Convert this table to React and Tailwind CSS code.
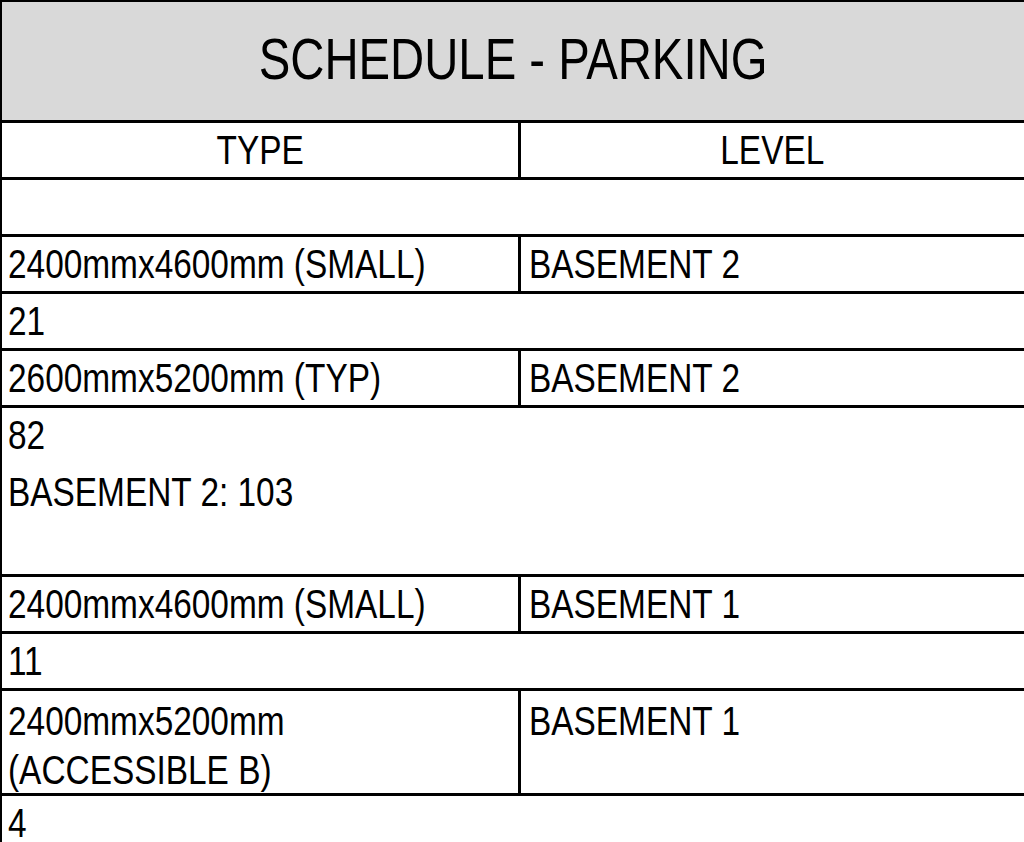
import React from 'react';

// Parking schedule sheet
const rows = [
    { kind: 'blank' },
    { kind: 'pair', type: ['2400mmx4600mm (SMALL)'], level: 'BASEMENT 2' },
    { kind: 'count', text: '21' },
    { kind: 'pair', type: ['2600mmx5200mm (TYP)'], level: 'BASEMENT 2' },
    { kind: 'footer', count: '82', total: 'BASEMENT 2: 103' },
    { kind: 'pair', type: ['2400mmx4600mm (SMALL)'], level: 'BASEMENT 1' },
    { kind: 'count', text: '11' },
    { kind: 'pair', type: ['2400mmx5200mm', '(ACCESSIBLE B)'], level: 'BASEMENT 1', tall: true },
    { kind: 'count', text: '4', last: true },
];

// narrow face: no Arial Narrow here, so squeeze Liberation Sans
const T = ({ children }) => (
    <span className="inline-block origin-left scale-x-[0.835] whitespace-nowrap">{children}</span>
);

function Row({ r }) {
    if (r.kind === 'blank') {
        return <div className="h-[57px] border-b-[3px] border-black" />;
    }
    if (r.kind === 'count') {
        return (
            <div className={`h-[57px] pl-[6px] leading-[54px] ${r.last ? '' : 'border-b-[3px] border-black'}`}>
                <T>{r.text}</T>
            </div>
        );
    }
    if (r.kind === 'footer') {
        return (
            <div className="h-[169px] pl-[6px] border-b-[3px] border-black">
                <div className="h-[57px] leading-[54px]"><T>{r.count}</T></div>
                <div className="h-[57px] leading-[54px]"><T>{r.total}</T></div>
            </div>
        );
    }
    return (
        <div className={`grid grid-cols-[519px_1fr] border-b-[3px] border-black ${r.tall ? 'h-[105px]' : 'h-[57px]'}`}>
            <div className={`border-r-[3px] border-black pl-[6px] ${r.tall ? 'pt-[6px] leading-[49px]' : 'leading-[54px]'}`}>
                {r.type.map((t, i) => <div key={i}><T>{t}</T></div>)}
            </div>
            <div className={`pl-[8px] ${r.tall ? 'pt-[6px] leading-[49px]' : 'leading-[54px]'}`}>
                <T>{r.level}</T>
            </div>
        </div>
    );
}

export default function App() {
    return (
        <div className="w-[1024px] h-[842px] overflow-hidden bg-white text-black font-['Liberation_Sans',Arial,sans-serif]">
            <div className="border-t-2 border-l-2 border-black">
                {/* Title */}
                <div className="h-[121px] bg-[#d9d9d9] border-b-[3px] border-black flex items-center justify-center pb-[4px]">
                    <span className="inline-block text-[58px] leading-none scale-x-[0.815] whitespace-nowrap">SCHEDULE - PARKING</span>
                </div>

                {/* Column headings */}
                <div className="grid grid-cols-[519px_1fr] h-[57px] border-b-[3px] border-black text-[40px] text-center">
                    <div className="border-r-[3px] border-black leading-[54px]">
                        <span className="inline-block scale-x-[0.835]">TYPE</span>
                    </div>
                    <div className="leading-[54px]">
                        <span className="inline-block scale-x-[0.835]">LEVEL</span>
                    </div>
                </div>

                <div className="text-[40px]">
                    {rows.map((r, i) => <Row key={i} r={r} />)}
                </div>
            </div>
        </div>
    );
}
